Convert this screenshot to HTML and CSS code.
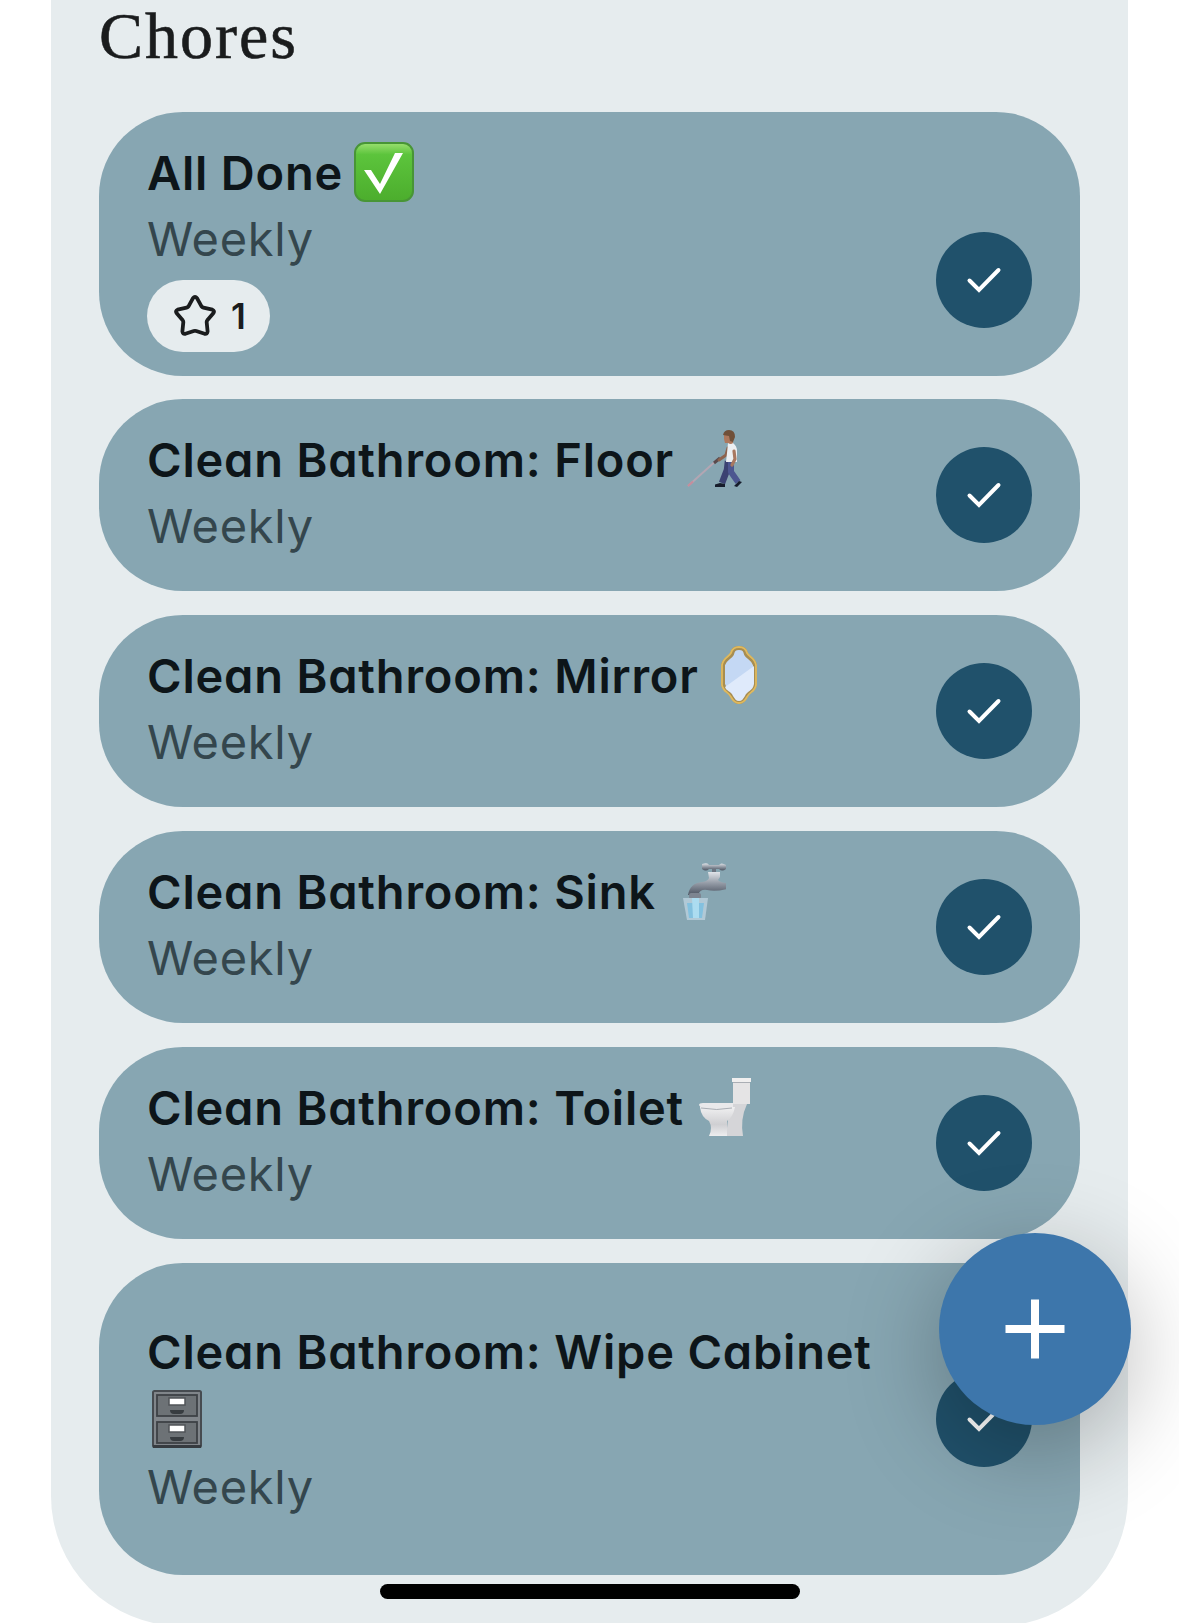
FILE: index.html
```html
<!DOCTYPE html>
<html lang="en">
<head>
  <meta charset="UTF-8">
  <meta name="viewport" content="width=device-width, initial-scale=1.0">
  <title>Chores</title>
  <link rel="stylesheet" href="styles.css">
</head>
<body>
  <!-- Shared check icon -->
  <svg class="defs" width="0" height="0">
    <symbol id="check" viewBox="0 0 96 96">
      <path d="M33.5 48.5L43 58L62.5 38" fill="none" stroke="#fff" stroke-width="4" stroke-linecap="round" stroke-linejoin="miter"/>
    </symbol>
  </svg>

  <main class="panel">
    <h1>Chores</h1>

    <div class="chores">
      <div class="chore chore-reward">
        <div class="info">
          <h2>All Done <svg class="emoji" viewBox="0 0 60 60">
            <defs>
              <linearGradient id="green" x1="0" y1="0" x2="0" y2="1">
                <stop offset="0" stop-color="#9be070"/>
                <stop offset=".2" stop-color="#5cc43c"/>
                <stop offset="1" stop-color="#4cad2d"/>
              </linearGradient>
            </defs>
            <rect x="1" y="1" width="58" height="58" rx="10" fill="url(#green)" stroke="#489536" stroke-width="2"/>
            <path d="M10 28h7l9 14L41 11h8L26 52z" fill="#fff"/>
          </svg></h2>
          <p>Weekly</p>
          <div class="badge">
            <svg class="star" viewBox="0 0 42 42">
              <path d="M19 3.2Q21 .6 23 3.2L27.5 11.3Q28.2 12.3 29.4 12.6L38.4 14.7Q41 15.8 39.3 18.3L33.3 25.3Q32.6 26.2 32.7 27.3L33.6 36.4Q33.3 39.4 30.6 38.8L22.2 36Q21 35.6 19.8 36L11.4 38.8Q8.7 39.4 8.4 36.4L9.3 27.3Q9.4 26.2 8.7 25.3L2.7 18.3Q1 15.8 3.6 14.7L12.6 12.6Q13.8 12.3 14.5 11.3Z" fill="none" stroke="#1a1c1d" stroke-width="3.8" stroke-linejoin="round"/>
            </svg>
            <span>1</span>
          </div>
        </div>
        <button class="done" aria-label="Done"><svg><use href="#check"/></svg></button>
      </div>

      <div class="chore">
        <div class="info">
          <h2>Clean Bathroom: Floor <svg class="emoji" viewBox="0 0 60 60">
            <path d="M3 57L33 30" stroke="#b3a6b3" stroke-width="2"/>
            <path d="M3 57L8 52.500" stroke="#c58d9c" stroke-width="2.2"/>
            <path d="M29 34l6-5" stroke="#5a4a4c" stroke-width="3"/>
            <path d="M43 32L42 41L37 54" fill="none" stroke="#3b4272" stroke-width="6.500" stroke-linejoin="round"/>
            <path d="M46 32L46 43L53 53" fill="none" stroke="#4c5690" stroke-width="6" stroke-linejoin="round"/>
            <path d="M30 58v-2.500l5-1.500 5 1v3zM49 57l5-5 3 1-5 5z" fill="#161c2b"/>
            <path d="M43 19l-2 7-7 5" fill="none" stroke="#8d624d" stroke-width="3" stroke-linecap="round"/>
            <path d="M43 14h5q4 3 4 8v11H41l1-9z" fill="#eceff2"/>
            <path d="M49 22l1 8-3 6" fill="none" stroke="#a87860" stroke-width="3.200" stroke-linecap="round"/>
            <path d="M39 4h9v10q-2 2-5 0h-3l-1-4z" fill="#ad785d"/>
            <path d="M38 6q1-5 6-5 6 0 6 7l-2 5-3-1-1-5z" fill="#705039"/>
          </svg></h2>
          <p>Weekly</p>
        </div>
        <button class="done" aria-label="Done"><svg><use href="#check"/></svg></button>
      </div>

      <div class="chore">
        <div class="info">
          <h2>Clean Bathroom: Mirror <svg class="emoji" viewBox="0 0 60 60">
            <path d="M30 3c5 0 6 2 7 6 2 4 8 5 9 11v19c-1 7-7 7-9 12-2 4-4 6-7 6s-5-2-7-6c-2-5-8-5-9-12V20c1-6 7-7 9-11 1-4 2-6 7-6z" fill="#c4d8f4" stroke="#a78d51" stroke-width="4"/>
            <path d="M45 21v18c-1 7-7 7-9 12-2 3-3 5-6 5s-4-2-6-5c-2-5-7-5-8-9z" fill="#dfeafb"/>
            <path d="M30 2c5 0 7 2 8 6 2 4 8 5 9 12v20c-1 7-7 7-9 12-2 4-4 6-8 6s-6-2-8-6c-2-5-8-5-9-12V20c1-7 7-8 9-12 1-4 3-6 8-6z" fill="none" stroke="#dfb95e" stroke-width="1.8"/>
          </svg></h2>
          <p>Weekly</p>
        </div>
        <button class="done" aria-label="Done"><svg><use href="#check"/></svg></button>
      </div>

      <div class="chore">
        <div class="info">
          <h2>Clean Bathroom: Sink <svg class="emoji" viewBox="0 0 60 60">
            <defs>
              <linearGradient id="chrome" x1="0" y1="0" x2="0" y2="1">
                <stop offset="0" stop-color="#e0e4e9"/>
                <stop offset=".5" stop-color="#9299a4"/>
                <stop offset="1" stop-color="#4b5361"/>
              </linearGradient>
            </defs>
            <path d="M46 5h4v8h-4z" fill="#6c7480"/>
            <path d="M36 3q6-2 7 1h10q2-3 7 0v4q-4 3-7 0H43q-3 3-7 0z" fill="url(#chrome)"/>
            <path d="M42 11h12v5l-2 3q3 3 9 3v6q-12 3-20 1-7-1-9 5H22q2-12 14-13 6-1 7-4z" fill="url(#chrome)"/>
            <rect x="23" y="32" width="12" height="6" rx="2" fill="#7d8591"/>
            <path d="M17 37h25l-3 22H21z" fill="#b1c9d6"/>
            <path d="M21 42h17l-2 15H23z" fill="#83c1df"/>
            <path d="M26 37h7v20h-6z" fill="#acdcf0"/>
          </svg></h2>
          <p>Weekly</p>
        </div>
        <button class="done" aria-label="Done"><svg><use href="#check"/></svg></button>
      </div>

      <div class="chore">
        <div class="info">
          <h2>Clean Bathroom: Toilet <svg class="emoji" viewBox="0 0 60 60">
            <defs>
              <linearGradient id="china" x1="0" y1="0" x2="0" y2="1">
                <stop offset="0" stop-color="#f0f0f1"/>
                <stop offset=".6" stop-color="#cfcfd2"/>
                <stop offset="1" stop-color="#eeeeef"/>
              </linearGradient>
            </defs>
            <path d="M35 27h17q-7 15-4 32H31z" fill="#d5d5d8"/>
            <path d="M5 30h35q-2 10-8 14v15H14q4-8 0-15Q6 40 5 30z" fill="url(#china)"/>
            <path d="M4 28q0-2 4-2h30v4q-12 4-32 1z" fill="#e9e9eb"/>
            <path d="M38 5h17v22H38z" fill="#e5e4e5"/>
            <path d="M37 1h19v4H37z" fill="#f0efef"/>
            <path d="M38 5.500h17M6 31q16 3 31 0" fill="none" stroke="#aaaeb4" stroke-width="1"/>
          </svg></h2>
          <p>Weekly</p>
        </div>
        <button class="done" aria-label="Done"><svg><use href="#check"/></svg></button>
      </div>

      <div class="chore chore-tall">
        <div class="info">
          <h2>Clean Bathroom: Wipe Cabinet <svg class="emoji" viewBox="0 0 60 60">
            <rect x="8" y="2" width="48" height="56" rx="1.500" fill="#80858a" stroke="#464b50" stroke-width="2"/>
            <path d="M8 56h48v3H8z" fill="#363b40"/>
            <g id="drawer">
              <rect x="12" y="6" width="40" height="21" fill="#6d7276" stroke="#3d4246" stroke-width="1.800"/>
              <rect x="24" y="9" width="16" height="7" fill="#fff" stroke="#505458" stroke-width="1.500"/>
              <path d="M25 21h14q0 4-4 4h-6q-4 0-4-4z" fill="#373c40"/>
            </g>
            <use href="#drawer" y="27"/>
          </svg></h2>
          <p>Weekly</p>
        </div>
        <button class="done" aria-label="Done"><svg><use href="#check"/></svg></button>
      </div>
    </div>
  </main>

  <!-- Floating add button -->
  <button class="add" aria-label="Add chore">
    <svg viewBox="0 0 60 60"><path d="M30 .5v59M.5 30h59" stroke="#fff" stroke-width="8"/></svg>
  </button>

  <div class="home-indicator"></div>
</body>
</html>
```
FILE: styles.css
```css
* {
  margin: 0;
  padding: 0;
  box-sizing: border-box;
}

body {
  height: 1623px;
  overflow: hidden;
  background-color: #fff;
  font-family: Inter, "Liberation Sans", sans-serif;
  font-feature-settings: "cv11"; /* single-storey a */
}

.defs {
  position: absolute;
}

.panel {
  height: 1626px;
  margin: 0 51px;
  padding: 0 48px;
  background-color: #e6ecee;
  border-radius: 0 0 130px 130px;
}

h1 {
  height: 112px;
  line-height: 72px;
  font-family: "Liberation Serif", serif;
  font-size: 66px;
  font-weight: 400;
  letter-spacing: 2px;
  color: #1a1c1d;
  -webkit-text-stroke: 0.6px #1a1c1d;
}

.chores {
  display: flex;
  flex-direction: column;
  gap: 24px;
}

.chore {
  display: flex;
  align-items: center;
  justify-content: space-between;
  height: 192px;
  padding: 0 48px;
  background-color: #87a6b2;
  border-radius: 84px;
}

.chore-reward {
  height: 264px;
  margin-bottom: -1px;
}

.chore-reward .done {
  margin-top: 72px;
}

.chore-tall {
  height: 312px;
}

.info {
  flex: 1;
  padding-bottom: 4px;
}

.chore-reward .info {
  padding: 4px 0 0;
}

.chore-tall .info {
  padding-bottom: 0;
}

.info h2,
.info p {
  font-size: 47px;
  line-height: 66px;
}

.info h2 {
  font-weight: 600;
  letter-spacing: 0.8px;
  color: #0d1519;
}

.chore-tall h2 {
  line-height: 68px;
}

.info p {
  font-weight: 400;
  letter-spacing: 0.7px;
  color: #34464d;
}

.emoji {
  width: 60px;
  height: 60px;
  margin-left: -2px;
  margin-bottom: -6px;
  vertical-align: -6px;
}

.badge {
  display: flex;
  align-items: center;
  gap: 15px;
  width: 123px;
  height: 72px;
  margin-top: 8px;
  padding-left: 27px;
  background-color: #e6ecee;
  border-radius: 36px;
  font-size: 35px;
  font-weight: 600;
  color: #1a1c1d;
}

.star {
  width: 42px;
  height: 42px;
}

.done {
  width: 96px;
  height: 96px;
  border: none;
  border-radius: 50%;
  background-color: #20516b;
}

.done svg {
  display: block;
  width: 96px;
  height: 96px;
}

.add {
  position: fixed;
  left: 939px;
  top: 1233px;
  display: flex;
  align-items: center;
  justify-content: center;
  width: 192px;
  height: 192px;
  border: none;
  border-radius: 50%;
  background-color: #3d76ab;
  box-shadow: 0 24px 96px rgba(0, 0, 0, 0.28);
}

.add svg {
  width: 60px;
  height: 60px;
}

.home-indicator {
  position: fixed;
  left: 380px;
  top: 1584px;
  width: 420px;
  height: 15px;
  border-radius: 8px;
  background-color: #000;
}
```
